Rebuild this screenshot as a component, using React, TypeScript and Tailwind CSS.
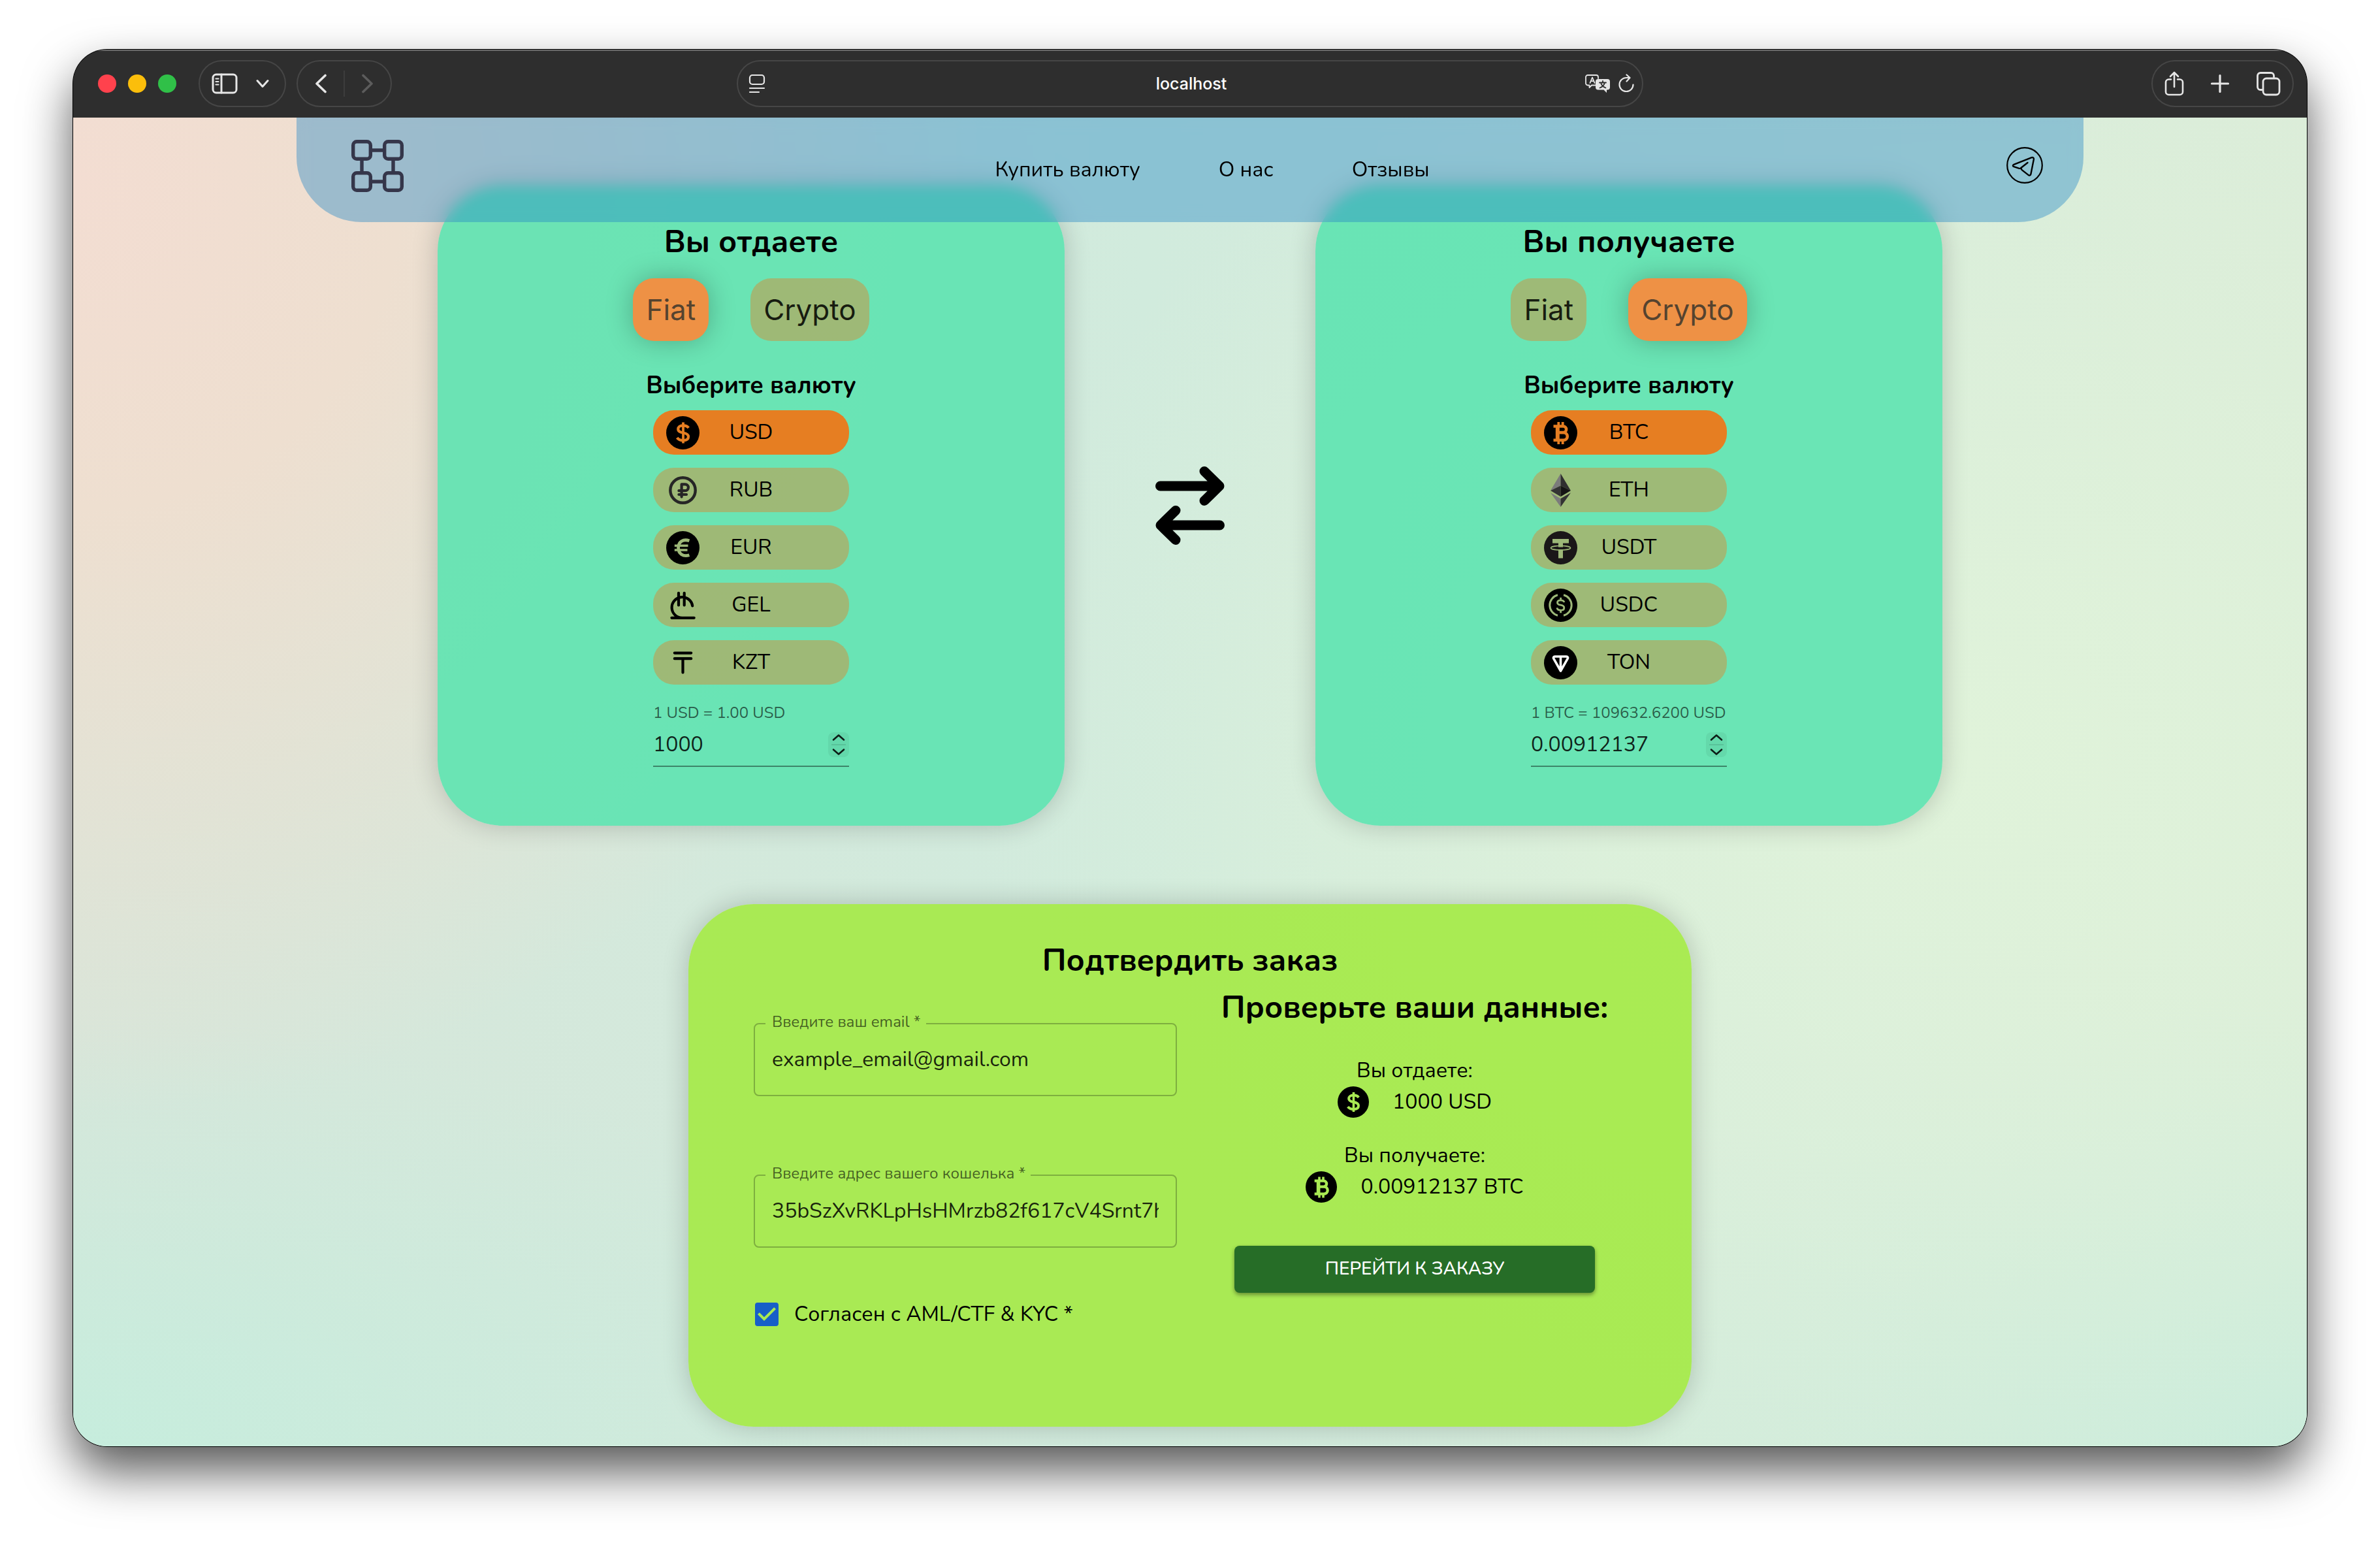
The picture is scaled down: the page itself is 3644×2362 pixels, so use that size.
import type { ReactNode } from "react";

const ROUND = { fill: "none", strokeLinecap: "round", strokeLinejoin: "round" } as const;

function Usd() {
  return (
    <svg viewBox="0 0 51 51" className="size-full" fill="none" stroke="currentColor" aria-hidden="true">
      <circle cx="25.5" cy="25.5" r="25.5" fill="#000" stroke="none" />
      <path strokeWidth="4.2" d="M34.3 18C32.5 15.6 29.5 14.4 26 14.4C21 14.4 18.2 16.6 18.2 19.9C18.2 23.5 21.2 24.6 26 25.5C31 26.4 34 27.9 34 31.5C34 35.2 31 37.1 26 37.1C22 37.1 18.6 35.8 16.7 33" />
      <path strokeWidth="3.8" d="M26 9.5v32" />
    </svg>
  );
}

function Rub() {
  return (
    <svg viewBox="0 0 51 51" className="size-full" {...ROUND} stroke="#262626" aria-hidden="true">
      <circle cx="25.5" cy="25.5" r="19.2" strokeWidth="4.4" />
      <path strokeWidth="4.2" d="M23.6 35.6V16.4H29a4.9 4.9 0 0 1 0 9.8H19.4M19.4 32H31" />
    </svg>
  );
}

function Eur() {
  return (
    <svg viewBox="0 0 51 51" className="size-full" fill="none" stroke="currentColor" aria-hidden="true">
      <circle cx="25.5" cy="25.5" r="25.5" fill="#000" stroke="none" />
      <path strokeWidth="4.8" d="M35.4 14.8C26 11.6 18.6 16.4 18.6 25.5C18.6 34.8 26 39.8 35.4 36.8" />
      <path strokeWidth="3.6" d="M12.8 22.2H33.5M12.8 29H32.5" />
    </svg>
  );
}

function Gel() {
  return (
    <svg viewBox="0 0 51 51" className="size-full" {...ROUND} stroke="#000" strokeWidth="4.2" aria-hidden="true">
      <path d="M40.2 26.4A15.9 15.9 0 1 0 24.5 44.8M8.4 44.8H42.7M19 6.8V25.4M27.7 6.8V25.4" />
    </svg>
  );
}

function Kzt() {
  return (
    <svg viewBox="0 0 51 51" className="size-full" {...ROUND} stroke="#000" strokeWidth="4.2" aria-hidden="true">
      <path d="M12.8 10.6H38.2M12.8 19.2H38.2M25.5 19.2V40.5" />
    </svg>
  );
}

function Btc() {
  return (
    <svg viewBox="0 0 51 51" className="size-full" fill="none" stroke="currentColor" aria-hidden="true">
      <circle cx="25.5" cy="25.5" r="25.5" fill="#000" stroke="none" />
      <path strokeWidth="4.6" d="M14.5 15.5H29.3a4.8 4.8 0 0 1 0 9.6H22M29.3 25.1H30a5.8 5.8 0 0 1 0 11.6H14.5" />
      <path strokeWidth="6" d="M20.8 14V38" />
      <path strokeWidth="3.8" d="M22.3 9v6M28.7 9v6M22.3 37v6M28.7 37v6" />
    </svg>
  );
}

function Eth() {
  return (
    <svg viewBox="0 0 51 51" className="size-full" aria-hidden="true">
      <path fill="#7b7b7b" d="M25.5 0 10 26 25.5 18.6z" />
      <path fill="#2f2f2f" d="M25.5 0 41 26 25.5 18.6z" />
      <path fill="#333" d="M25.5 18.6 10 26 25.5 35.2z" />
      <path fill="#151515" d="M25.5 18.6 41 26 25.5 35.2z" />
      <path fill="#7b7b7b" d="M10 29.2 25.5 38.2V51z" />
      <path fill="#333" d="M41 29.2 25.5 38.2V51z" />
    </svg>
  );
}

function Usdt() {
  return (
    <svg viewBox="0 0 51 51" className="size-full" aria-hidden="true">
      <circle cx="25.5" cy="25.5" r="25.5" fill="#1a1718" />
      <path fill="currentColor" d="M13 12H38V18.6H29V24.5H22V18.6H13zM22 28H29V41.5H22z" />
      <ellipse cx="25.5" cy="25.8" rx="15" ry="3.3" fill="none" stroke="currentColor" strokeWidth="1.6" />
    </svg>
  );
}

function Usdc() {
  return (
    <svg viewBox="0 0 51 51" className="size-full" fill="none" stroke="currentColor" aria-hidden="true">
      <circle cx="25.5" cy="25.5" r="25.5" fill="#000" stroke="none" />
      <path strokeWidth="3" d="M21 9.8A16.2 16.2 0 0 0 21 41.2M30 9.8A16.2 16.2 0 0 1 30 41.2" />
      <path strokeWidth="2.8" d="M31 21C30.4 18.6 28.3 17.8 25.6 17.8C22.6 17.8 20.5 19 20.5 21.4C20.5 24 22.6 24.7 25.6 25.2C28.7 25.8 30.8 26.6 30.8 29.4C30.8 31.9 28.5 33.2 25.6 33.2C22.5 33.2 20.4 31.9 19.8 29.4M25.6 13.8V18M25.6 33V37.2" />
    </svg>
  );
}

function Ton() {
  return (
    <svg viewBox="0 0 51 51" className="size-full" {...ROUND} stroke="#fff" strokeWidth="3.6" aria-hidden="true">
      <circle cx="25.5" cy="25.5" r="25.5" fill="#000" stroke="none" />
      <path d="M16.6 16H34.4C36.3 16 37.1 17.8 36.1 19.4L25.5 38 14.9 19.4C13.9 17.8 14.7 16 16.6 16ZM25.5 16V37" />
    </svg>
  );
}

type Currency = { code: string; icon: ReactNode };

const FIAT: Currency[] = [
  { code: "USD", icon: <Usd /> },
  { code: "RUB", icon: <Rub /> },
  { code: "EUR", icon: <Eur /> },
  { code: "GEL", icon: <Gel /> },
  { code: "KZT", icon: <Kzt /> },
];

const CRYPTO: Currency[] = [
  { code: "BTC", icon: <Btc /> },
  { code: "ETH", icon: <Eth /> },
  { code: "USDT", icon: <Usdt /> },
  { code: "USDC", icon: <Usdc /> },
  { code: "TON", icon: <Ton /> },
];

function ToolbarIcon({ label, className, viewBox, children }: { label: string; className: string; viewBox: string; children: ReactNode }) {
  return (
    <button type="button" aria-label={label} className="shrink-0">
      <svg viewBox={viewBox} className={className} {...ROUND} stroke="#e6e6e6" strokeWidth="3">
        {children}
      </svg>
    </button>
  );
}

function Toolbar() {
  return (
    <div className="grid h-[104px] grid-cols-[1fr_1388px_1fr] items-center bg-[#2e2e2e] shadow-[inset_0_2px_0_#6b6b6b]">
      <div className="flex items-center pl-[38px]">
        <div className="flex gap-[18px]">
          <button type="button" aria-label="Close" className="size-7 rounded-full bg-[#ff424d]" />
          <button type="button" aria-label="Minimize" className="size-7 rounded-full bg-[#fbbe0b]" />
          <button type="button" aria-label="Zoom" className="size-7 rounded-full bg-[#30c048]" />
        </div>
        <div className="ml-[34px] flex h-[72px] items-center gap-7 rounded-full border-2 border-[#464646] pr-6 pl-[18px]">
          <ToolbarIcon label="Sidebar" viewBox="0 0 40 32" className="h-8 w-10">
            <rect x="2" y="2" width="36" height="28" rx="5" />
            <path d="M15 2V30" />
            <path strokeWidth="2.2" d="M6.5 8.5h4M6.5 13h4M6.5 17.5h4" />
          </ToolbarIcon>
          <ToolbarIcon label="Tab groups" viewBox="0 0 20 14" className="h-[14px] w-5">
            <path d="M2 2.5 10 11.5 18 2.5" />
          </ToolbarIcon>
        </div>
        <div className="ml-4 flex h-[72px] items-center gap-[25px] rounded-full border-2 border-[#464646] px-[25px]">
          <ToolbarIcon label="Back" viewBox="0 0 20 30" className="h-[30px] w-5">
            <path strokeWidth="3.6" d="M17 2.5 4 15 17 27.5" />
          </ToolbarIcon>
          <span className="h-10 w-[2px] bg-[#3d3d3d]" />
          <ToolbarIcon label="Forward" viewBox="0 0 20 30" className="h-[30px] w-5">
            <path strokeWidth="3.6" stroke="#5c5c5c" d="M3 2.5 16 15 3 27.5" />
          </ToolbarIcon>
        </div>
      </div>

      <div className="flex h-[72px] items-center rounded-full border-2 border-[#464646] px-4 text-white">
        <div className="flex flex-1">
          <ToolbarIcon label="Reader" viewBox="0 0 26 30" className="h-[30px] w-[26px]">
            <g strokeWidth="2.2">
              <rect x="2" y="2" width="22" height="14" rx="4" />
              <path d="M2 22H24M2 28H16" />
            </g>
          </ToolbarIcon>
        </div>
        <span className="pt-[2px] font-['Inter',sans-serif] text-[25px] font-medium">localhost</span>
        <div className="-mr-1 flex flex-1 items-center justify-end gap-3">
          <ToolbarIcon label="Translate" viewBox="0 0 40 30" className="h-[30px] w-10">
            <path strokeWidth="1.8" d="M17 17.5H11L7.5 21V17.5H5a3 3 0 0 1-3-3V5a3 3 0 0 1 3-3H18a3 3 0 0 1 3 3V7" />
            <path strokeWidth="1.8" d="M8.5 14 12 5.5 15.5 14M9.7 11.2H14.3" />
            <path fill="#e6e6e6" stroke="none" d="M21 8H35a4 4 0 0 1 4 4v8.5a4 4 0 0 1-4 4H34V29L29.5 24.5H21a4 4 0 0 1-4-4V12a4 4 0 0 1 4-4z" />
            <path stroke="#2e2e2e" strokeWidth="1.8" d="M23 13.5H33M28 11V13.5M31 13.5C30 17.5 27.5 20 23.5 21.5M25 13.5C26 17.5 28.5 20 32.5 21.5" />
          </ToolbarIcon>
          <ToolbarIcon label="Reload" viewBox="0 0 24 30" className="h-[30px] w-6">
            <path strokeWidth="2.2" d="M22.5 16.5A10.5 10.5 0 1 1 12 6H17M12.5 1.5 17.5 6 12.5 11.5" />
          </ToolbarIcon>
        </div>
      </div>

      <div className="flex justify-end pr-5">
        <div className="flex h-[72px] items-center gap-10 rounded-full border-2 border-[#464646] px-[18px]">
          <ToolbarIcon label="Share" viewBox="0 0 30 38" className="h-[38px] w-[30px]">
            <path strokeWidth="2.6" d="M10 12.5H6.5a4.5 4.5 0 0 0-4.5 4.5V31.5a4.5 4.5 0 0 0 4.5 4.5H23.5a4.5 4.5 0 0 0 4.5-4.5V17a4.5 4.5 0 0 0-4.5-4.5H20M15 24V2M9 8 15 2 21 8" />
          </ToolbarIcon>
          <ToolbarIcon label="New tab" viewBox="0 0 30 30" className="size-[30px]">
            <path strokeWidth="3.2" d="M15 2.5V27.5M2.5 15H27.5" />
          </ToolbarIcon>
          <ToolbarIcon label="Tab overview" viewBox="0 0 38 38" className="size-[38px]">
            <rect x="11" y="11" width="25" height="25" rx="5" strokeWidth="2.8" />
            <path strokeWidth="2.8" d="M9 28.5H7a4.5 4.5 0 0 1-4.5-4.5V7A4.5 4.5 0 0 1 7 2.5H23A4.5 4.5 0 0 1 27.5 7V9" />
          </ToolbarIcon>
        </div>
      </div>
    </div>
  );
}

function Header() {
  return (
    <header className="relative z-10 mx-auto flex h-40 w-4/5 items-center justify-between rounded-b-[100px] bg-[#2184c6]/40 pr-[62px] pl-[84px] backdrop-blur-[10px]">
      <a href="#home" aria-label="На главную" className="-mt-3 pr-[22px]">
        <svg viewBox="0 0 80 80" className="size-20" fill="none" stroke="#35364a" strokeWidth="5.4">
          <rect x="2.7" y="2.7" width="26.6" height="26.6" rx="5.5" />
          <rect x="50.7" y="2.7" width="26.6" height="26.6" rx="5.5" />
          <rect x="2.7" y="50.7" width="26.6" height="26.6" rx="5.5" />
          <rect x="50.7" y="50.7" width="26.6" height="26.6" rx="5.5" />
          <path d="M32 16H48M32 64H48M16 32V48M64 32V48" />
        </svg>
      </a>
      <nav className="flex gap-[120px] text-[32px] leading-10">
        <a href="#buy">Купить валюту</a>
        <a href="#about">О нас</a>
        <a href="#reviews">Отзывы</a>
      </nav>
      <a href="#telegram" aria-label="Telegram" className="-mt-[14px]">
        <svg viewBox="0 0 56 56" className="size-14" {...ROUND} stroke="#000" strokeWidth="2.2">
          <circle cx="28" cy="28" r="26.8" />
          <path strokeWidth="2.4" d="M32.5 24 22 32.3C21.2 33 20 33 19 32.7L11.4 30.2C9.4 29.5 9.4 27.6 11.4 26.8L38.6 16.2C40.7 15.5 42.2 16.8 41.9 18.8L37.4 41.5C37 43.5 35.2 44 33.6 42.9L24 35.4C23.2 34.7 22.8 33.8 22.8 32.8" />
        </svg>
      </a>
    </header>
  );
}

function KindButton({ active, children }: { active: boolean; children: string }) {
  return (
    <button
      type="button"
      aria-pressed={active}
      className={
        active
          ? "h-24 rounded-[32px] bg-[#ee9145] px-5 text-[#55432f] shadow-[0_0_40px_rgba(0,0,0,0.25)]"
          : "h-24 rounded-[32px] bg-[#e67e22]/42 px-5 text-[#171c10]"
      }
    >
      {children}
    </button>
  );
}

function ExchangeCard({ id, title, kind, items, rate, amount }: { id: string; title: string; kind: "Fiat" | "Crypto"; items: Currency[]; rate: string; amount: string }) {
  return (
    <section className="flex flex-col items-center rounded-[100px] bg-[#5de3b0]/90 pt-[54px] pb-[90px] shadow-[0_0_40px_rgba(0,0,0,0.2)]">
      <h2 className="text-5xl leading-[64px] font-bold">{title}</h2>
      <div className="mt-6 flex gap-16 font-['Inter',sans-serif] text-[44px]">
        <KindButton active={kind === "Fiat"}>Fiat</KindButton>
        <KindButton active={kind === "Crypto"}>Crypto</KindButton>
      </div>
      <h3 className="mt-11 text-[37px] leading-[48px] font-bold">{"Выберите валюту"}</h3>
      <div className="mt-[14px] flex w-[300px] flex-col gap-5">
        {items.map(({ code, icon }, i) => (
          <button
            key={code}
            type="button"
            aria-pressed={i === 0}
            className={
              i === 0
                ? "flex h-[68px] items-center rounded-[32px] bg-[#e67e22] px-5 text-[32px]"
                : "flex h-[68px] items-center rounded-[32px] bg-[#e67e22]/42 px-5 text-[32px]"
            }
          >
            <span className={i === 0 ? "size-[51px] text-[#e67e22]" : "size-[51px] text-[#9db878]"}>{icon}</span>
            <span className="flex-1 pr-[51px] text-center">{code}</span>
          </button>
        ))}
      </div>
      <div className="mt-[27px] w-[300px]">
        <label htmlFor={id} className="block text-2xl leading-8 whitespace-nowrap text-black/60">{rate}</label>
        <div className="mt-2 flex h-[59px] items-center border-b-2 border-black/42 pb-2">
          <input
            id={id}
            type="number"
            step="any"
            defaultValue={amount}
            className="w-0 min-w-0 flex-1 text-[32px] leading-[48px] text-black/87 outline-none [appearance:textfield] [&::-webkit-inner-spin-button]:appearance-none"
          />
          <span className="flex h-[38px] w-8 flex-col items-center justify-center divide-y-2 divide-black/10 rounded-lg bg-black/5">
            <button type="button" aria-label="Больше" className="pb-1">
              <svg viewBox="0 0 22 12" className="h-3 w-[22px]" {...ROUND} stroke="#0d1d17" strokeWidth="2.6"><path d="M3 9.5 11 2.5 19 9.5" /></svg>
            </button>
            <button type="button" aria-label="Меньше" className="pt-1">
              <svg viewBox="0 0 22 12" className="h-3 w-[22px]" {...ROUND} stroke="#0d1d17" strokeWidth="2.6"><path d="M3 2.5 11 9.5 19 2.5" /></svg>
            </button>
          </span>
        </div>
      </div>
    </section>
  );
}

function OutlinedField({ id, label, type, value }: { id: string; label: string; type: string; value: string }) {
  return (
    <fieldset className="h-[126px] min-w-0 rounded-lg border-2 border-black/25">
      <legend className="ml-4 pr-2 pb-[6px] pl-[10px] text-2xl leading-6 text-black/60">
        <label htmlFor={id}>{label}</label>
      </legend>
      <div className="px-[26px]">
        <input id={id} type={type} defaultValue={value} className="block h-[78px] w-full text-[32px] text-black/87 outline-none" />
      </div>
    </fieldset>
  );
}

function Summary({ title, value, icon }: { title: string; value: string; icon: ReactNode }) {
  return (
    <div className="text-[32px] leading-[48px]">
      <p>{title}</p>
      <p className="flex items-center justify-center gap-9">
        <span className="size-12 text-[#a9ea53]">{icon}</span>
        {value}
      </p>
    </div>
  );
}

function OrderForm() {
  return (
    <form className="mx-auto mt-[120px] w-2/3 rounded-[100px] bg-[#a6ea4c]/95 px-[100px] pt-[54px] pb-[148px] shadow-[0_0_40px_rgba(0,0,0,0.2)]">
      <h2 className="text-center text-5xl leading-[64px] font-bold">{"Подтвердить заказ"}</h2>
      <div className="mt-2 grid grid-cols-2 gap-10">
        <div className="pt-[42px]">
          <OutlinedField id="email" label="Введите ваш email *" type="email" value="example_email@gmail.com" />
          <div className="mt-[106px]">
            <OutlinedField id="wallet" label="Введите адрес вашего кошелька *" type="text" value="35bSzXvRKLpHsHMrzb82f617cV4Srnt7hS" />
          </div>
          <label className="mt-[78px] ml-[2px] flex items-center gap-6 text-[32px] leading-[48px]">
            <span className="relative size-9">
              <input type="checkbox" defaultChecked className="peer block size-9 appearance-none rounded-[4px] border-4 border-black/60 checked:border-[#175fc8] checked:bg-[#175fc8]" />
              <svg viewBox="0 0 18 18" className="pointer-events-none absolute inset-0 hidden size-9 peer-checked:block" aria-hidden="true">
                <path fill="#a9ea53" d="M7 14 2 9 3.41 7.59 7 11.17 14.59 3.58 16 5z" />
              </svg>
            </span>
            {"Согласен с AML/CTF & KYC *"}
          </label>
        </div>
        <div className="flex flex-col items-center text-center">
          <h2 className="text-5xl leading-[64px] font-bold whitespace-nowrap">{"Проверьте ваши данные:"}</h2>
          <div className="mt-[41px] flex flex-col gap-[34px]">
            <Summary title="Вы отдаете:" value="1000 USD" icon={<Usd />} />
            <Summary title="Вы получаете:" value="0.00912137 BTC" icon={<Btc />} />
          </div>
          <button type="submit" className="mt-[66px] h-[72px] w-[552px] rounded-lg bg-[#266d27] pb-[2px] text-[28px] font-medium text-white shadow-[0_3px_6px_rgba(0,0,0,0.4)]">
            {"ПЕРЕЙТИ К ЗАКАЗУ"}
          </button>
        </div>
      </div>
    </form>
  );
}

export default function App() {
  return (
    <div className="min-h-screen bg-white px-28 pt-[76px] pb-[148px] font-['Nunito','Lato',sans-serif] text-black">
      <div className="overflow-hidden rounded-[52px] bg-[#2e2e2e] shadow-[0_0_0_1px_#000,0_38px_76px_rgba(0,0,0,0.66)]">
        <Toolbar />
        <div className="bg-[radial-gradient(ellipse_42%_70%_at_0%_5%,#f3ddd2_0%,#eedfd0_35%,#eedfd000_100%),radial-gradient(ellipse_45%_60%_at_85%_48%,#e0f3da_0%,#e0f3da00_100%),radial-gradient(ellipse_40%_32%_at_0%_100%,#c6eddd_0%,#c6eddd00_100%),radial-gradient(ellipse_35%_35%_at_100%_100%,#c9ecdc_0%,#c9ecdc00_100%),linear-gradient(90deg,#d7e6da_0%,#d1ebdd_48%,#dbecd9_100%)] pb-[30px]">
          <Header />
          <main className="mx-auto -mt-14 max-w-[2304px]">
            <div className="grid grid-cols-[5fr_2fr_5fr] items-center">
              <ExchangeCard id="give" title="Вы отдаете" kind="Fiat" items={FIAT} rate="1 USD = 1.00 USD" amount="1000" />
              <svg viewBox="0 0 106 120" className="h-[120px] w-[106px] justify-self-center" {...ROUND} stroke="#000" strokeWidth="15" aria-hidden="true">
                <path d="M7.5 30H98M75 7.5 98 30 75 52.5M98.5 90H8M31 67.5 8 90 31 112.5" />
              </svg>
              <ExchangeCard id="get" title="Вы получаете" kind="Crypto" items={CRYPTO} rate="1 BTC = 109632.6200 USD" amount="0.00912137" />
            </div>
            <OrderForm />
          </main>
        </div>
      </div>
    </div>
  );
}
